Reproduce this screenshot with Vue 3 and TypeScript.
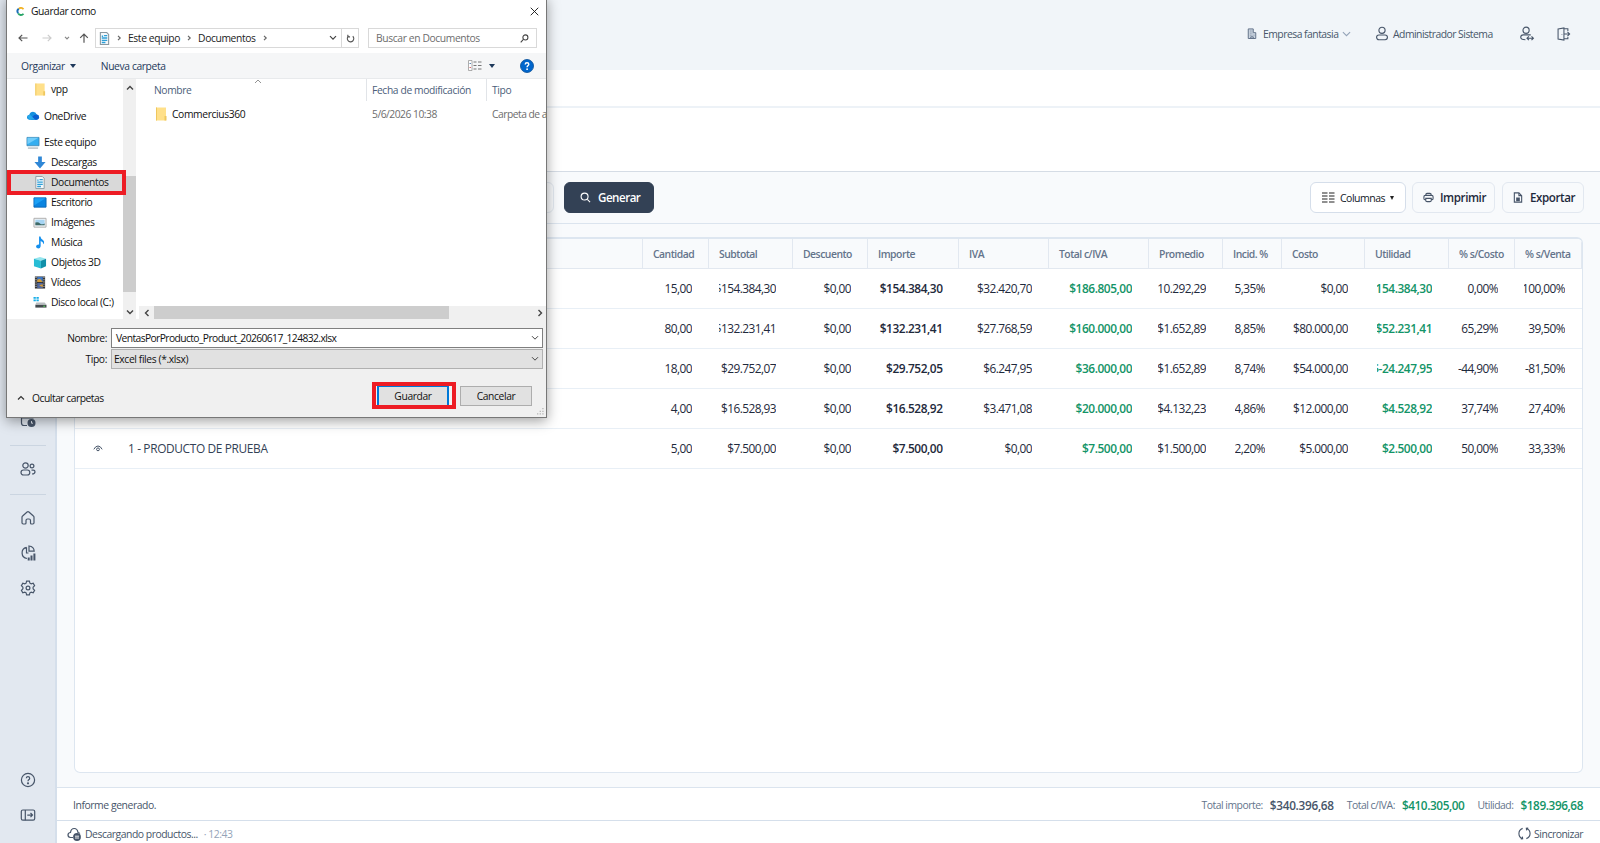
<script setup lang="ts">
interface Column { label: string; width: number; tone?: 'strong' | 'green' }
interface TreeItem { label: string; icon: string; level: 0 | 1; gap?: boolean; active?: boolean }

const columns: Column[] = [
  { label: 'Cantidad', width: 66 },
  { label: 'Subtotal', width: 84 },
  { label: 'Descuento', width: 75 },
  { label: 'Importe', width: 91, tone: 'strong' },
  { label: 'IVA', width: 90 },
  { label: 'Total c/IVA', width: 100, tone: 'green' },
  { label: 'Promedio', width: 74 },
  { label: 'Incid. %', width: 59 },
  { label: 'Costo', width: 83 },
  { label: 'Utilidad', width: 84, tone: 'green' },
  { label: '% s/Costo', width: 66 },
  { label: '% s/Venta', width: 67 },
]

const rows: { name: string; cells: string[] }[] = [
  { name: '', cells: ['15,00', '$154.384,30', '$0,00', '$154.384,30', '$32.420,70', '$186.805,00', '$10.292,29', '45,35%', '$0,00', '$154.384,30', '0,00%', '100,00%'] },
  { name: '', cells: ['80,00', '$132.231,41', '$0,00', '$132.231,41', '$27.768,59', '$160.000,00', '$1.652,89', '8,85%', '$80.000,00', '$52.231,41', '65,29%', '39,50%'] },
  { name: '', cells: ['18,00', '$29.752,07', '$0,00', '$29.752,05', '$6.247,95', '$36.000,00', '$1.652,89', '8,74%', '$54.000,00', '$-24.247,95', '-44,90%', '-81,50%'] },
  { name: '', cells: ['4,00', '$16.528,93', '$0,00', '$16.528,92', '$3.471,08', '$20.000,00', '$4.132,23', '4,86%', '$12.000,00', '$4.528,92', '37,74%', '27,40%'] },
  { name: '1 - PRODUCTO DE PRUEBA', cells: ['5,00', '$7.500,00', '$0,00', '$7.500,00', '$0,00', '$7.500,00', '$1.500,00', '2,20%', '$5.000,00', '$2.500,00', '50,00%', '33,33%'] },
]

const tree: TreeItem[] = [
  { label: 'vpp', icon: 'folder', level: 1 },
  { label: 'OneDrive', icon: 'cloud', level: 0, gap: true },
  { label: 'Este equipo', icon: 'pc', level: 0, gap: true },
  { label: 'Descargas', icon: 'down', level: 1 },
  { label: 'Documentos', icon: 'doc', level: 1, active: true },
  { label: 'Escritorio', icon: 'desk', level: 1 },
  { label: 'Imágenes', icon: 'image', level: 1 },
  { label: 'Música', icon: 'music', level: 1 },
  { label: 'Objetos 3D', icon: 'cube', level: 1 },
  { label: 'Vídeos', icon: 'video', level: 1 },
  { label: 'Disco local (C:)', icon: 'disk', level: 1 },
]
</script>

<template>
  <div class="app">
    <aside class="rail">
      <svg class="ri calendar" viewBox="0 0 16 16"><path d="M1.500 2v9q0 2.500 2.500 2.500H7M1.500 6h12" /><circle cx="11.500" cy="11" r="4" fill="#475569" stroke="none" /><path d="M11.500 9v2.200h1.500" stroke="#e2e8f0" stroke-width="1" /></svg>
      <hr class="d1" />
      <svg class="ri people" viewBox="0 0 16 16"><circle cx="5.500" cy="4.500" r="2.700" /><circle cx="12" cy="5" r="1.900" /><rect x="1" y="9" width="8.800" height="5" rx="2.500" /><path d="M11.500 9.200h1.800q1.700 0 1.700 1.600 0 2.200-3 2.200" /></svg>
      <hr class="d2" />
      <svg class="ri home" viewBox="0 0 16 16"><path d="M2 7.200Q2 6.500 2.600 6L7.100 2q.9-.8 1.800 0l4.500 4q.6.5.6 1.200v5.600q0 1.200-1.200 1.200h-1.300q-1 0-1-1V10.500q0-1.500-1.500-1.500H7.500Q6 9 6 10.500V13q0 1-1 1H3.200Q2 14 2 12.800z" /></svg>
      <svg class="ri chart" viewBox="0 0 16 16"><path d="M6.500 2.300A5.700 5.700 0 0 0 7 13.500M6.500 2.300V8h2M9 1v5.200h5.200Q14 1.500 9 1z" /><path d="M8.700 15.500v-3M11.500 15.500v-5M14.400 15.500v-7" stroke-width="2" /></svg>
      <svg class="ri gear" viewBox="0 0 16 16"><path d="M6.600 1.200h2.800l.5 2 1.300.7 2-.6 1.400 2.400-1.500 1.500v1.600l1.500 1.500-1.400 2.400-2-.6-1.300.7-.5 2H6.600l-.5-2-1.300-.7-2 .6-1.400-2.400 1.500-1.500V7.200L1.400 5.700l1.400-2.400 2 .6 1.300-.7z" /><circle cx="8" cy="8" r="1.900" /></svg>
      <svg class="ri help" viewBox="0 0 16 16"><circle cx="8" cy="8" r="6.600" /><path d="M6.300 6.300Q6.400 4.700 8 4.700t1.700 1.500Q9.700 7.100 8.700 7.800 8 8.300 8 9.200" /><circle cx="8" cy="11.300" r=".5" /></svg>
      <svg class="ri panel" viewBox="0 0 16 16"><rect x="1.300" y="3" width="13.400" height="10.200" rx="1.600" /><path d="M5.300 3v10.200M7.300 8.100h5M10.500 6l2 2.100-2 2.100" /></svg>
    </aside>

    <main class="main">
      <header class="top">
        <svg class="i building" viewBox="0 0 12 14"><path d="M1.500 13V1.500h6V6H10.500v7z" fill="#cbd5e1" stroke="#64748b" /><path d="M3.500 4h.8M5.500 4h.8M3.500 6.500h.8M5.500 6.500h.8M3.500 9h.8M5.500 9h.8M8 9h.8M4.500 13v-2h3v2" /></svg>
        <span class="t company">Empresa fantasia</span>
        <svg class="i chev" viewBox="0 0 10 6"><path d="M1 .8l4 4 4-4" /></svg>
        <svg class="i user" viewBox="0 0 14 16"><circle cx="7" cy="4.600" r="3.300" /><rect x="1.200" y="9.600" width="11.600" height="5" rx="2.500" /></svg>
        <span class="t admin">Administrador Sistema</span>
        <svg class="i swap" viewBox="0 0 16 16"><circle cx="7" cy="4.500" r="3.300" /><path d="M12 9.500H4Q1.300 9.500 1.300 12q0 2.600 5 2.600M8 13h6.500M10 11l-2 2 2 2M12.800 11l2 2-2 2" /></svg>
        <svg class="i exit" viewBox="0 0 16 16"><path d="M8.500 2H13v2.500M13 11.500V13.500H8.500M1.800 2.300L8.500 1v14l-6.700-1.300zM6.200 8v.5M8.500 8H15M12.500 5.500L15 8l-2.500 2.500" /></svg>
      </header>
      <div class="tabs" />
      <div class="heading" />
      <section class="tools">
        <span class="btn ghost" />
        <button class="btn primary"><svg viewBox="0 0 12 12"><circle cx="5" cy="5" r="3.800" /><path d="M8 8l3 3" /></svg><span>Generar</span></button>
        <i class="grow" />
        <button class="btn cols"><svg viewBox="0 0 13 11"><path d="M0 1h5.500M0 4h5.500M0 7h5.500M0 10h5.500M7 1h5.500M7 4h5.500M7 7h5.500M7 10h5.500" /></svg><span>Columnas</span><b class="tri" /></button>
        <button class="btn print"><svg viewBox="0 0 12 12"><path d="M3 3.500Q3 1.500 4.500 1.500h3Q9 1.500 9 3.500M3 8.500H2.500Q1 8.500 1 7V5.200Q1 3.700 2.500 3.700h7Q11 3.700 11 5.200V7Q11 8.500 9.500 8.500H9M3 7h6v2.200Q9 10.500 7.500 10.500h-3Q3 10.500 3 9.200z" /></svg><span>Imprimir</span></button>
        <button class="btn export"><svg viewBox="0 0 10 12"><path d="M1 1h5l3 3v7H1z" /><path d="M6 1v3h3" /><path d="M3 6h4v4H3z" fill="#475569" /></svg><span>Exportar</span></button>
      </section>
      <section class="content">
        <div class="grid">
          <div class="row head">
            <div class="name" />
            <div v-for="c in columns" :key="c.label" class="hc" :style="{ width: c.width + 'px' }">{{ c.label }}</div>
          </div>
          <div v-for="(r, n) in rows" :key="n" class="row">
            <div class="name">
              <svg class="eye" viewBox="0 0 12 8"><path d="M1 5Q3 1 6 1t5 4" /><circle cx="6" cy="5" r="1.700" /></svg>
              <span>{{ r.name }}</span>
            </div>
            <div v-for="(v, k) in r.cells" :key="k" class="cell" :class="columns[k].tone" :style="{ width: columns[k].width + 'px' }"><span class="clip"><span>{{ v }}</span></span></div>
          </div>
        </div>
      </section>
      <footer class="summary">
        <span class="msg">Informe generado.</span><i class="grow" />
        <span class="k k1">Total importe:</span><b class="v">$340.396,68</b>
        <span class="k k2">Total c/IVA:</span><b class="v green">$410.305,00</b>
        <span class="k k3">Utilidad:</span><b class="v green">$189.396,68</b>
      </footer>
      <footer class="status">
        <svg class="sync-cloud" viewBox="0 0 14 14"><path d="M6 10.500H3.500Q1 10.300 1 8t2.500-2.500Q4 1.500 7.200 1.500T11 5.500q1.300.1 1.800 1" /><circle cx="10" cy="10" r="3.900" fill="#475569" stroke="none" /><path d="M8 9.200h4M8 11h4" stroke="#fff" stroke-width=".9" /></svg>
        <span class="dl">Descargando productos...</span><span class="time">· 12:43</span><i class="grow" />
        <svg class="sync" viewBox="0 0 14 14"><path d="M5 1.500Q1 3 1 7t3.500 5.500M3 12.800l2-.2-.3-2.200M9 12.500Q13 11 13 7T9.500 1.500M11 1.200l-2 .2.300 2.200" /></svg>
        <span class="sy">Sincronizar</span>
      </footer>
    </main>

    <div class="dialog">
      <div class="title">
        <svg class="logo" viewBox="0 0 10 10"><path d="M8.300 2.500A3.500 3.500 0 0 0 3 2" stroke="#f2b01e" /><path d="M3 2a3.600 3.600 0 0 0-.6 5" stroke="#1d6fb8" /><path d="M2.400 7a3.500 3.500 0 0 0 5.900.5" stroke="#27a567" /></svg>
        <span>Guardar como</span><i class="grow" />
        <svg class="close" viewBox="0 0 10 10"><path d="M.8.800l8.400 8.400M9.200.800L.8 9.200" /></svg>
      </div>
      <div class="nav">
        <svg class="arr back" viewBox="0 0 10 8"><path d="M9.500 4H1M4.200.800L1 4l3.200 3.200" /></svg>
        <svg class="arr fwd" viewBox="0 0 10 8"><path d="M.5 4H9M5.800.800L9 4 5.800 7.200" /></svg>
        <svg class="arr small" viewBox="0 0 6 4"><path d="M1 .8l2 2 2-2" /></svg>
        <svg class="arr up" viewBox="0 0 10 10"><path d="M5 9.800V1M1.200 4.800L5 1l3.800 3.800" /></svg>
        <div class="address">
          <svg class="doc" viewBox="0 0 12 14"><path d="M1.500.5h7l2 2v11h-9z" fill="#f4f8fb" stroke="#8b989f" /><path d="M3 6.500h6M3 9h6M3 11.300h4M5.500 3.800h3.500M3 4.500h1.500" stroke="#2d9fd8" stroke-width="1.500" /></svg>
          <svg class="sep" viewBox="0 0 4 6"><path d="M1 .8L3.200 3 1 5.200" /></svg><span class="a1">Este equipo</span>
          <svg class="sep" viewBox="0 0 4 6"><path d="M1 .8L3.200 3 1 5.200" /></svg><span class="a2">Documentos</span>
          <svg class="sep" viewBox="0 0 4 6"><path d="M1 .8L3.200 3 1 5.200" /></svg><i class="grow" />
          <svg class="drop" viewBox="0 0 8 6"><path d="M1 1.200l3 3 3-3" /></svg>
          <span class="reload"><svg viewBox="0 0 10 10"><path d="M3 2.200A3.600 3.600 0 1 0 7.500 2.500M2 .8v2.400h2.500" /></svg></span>
        </div>
        <div class="search"><span>Buscar en Documentos</span><svg viewBox="0 0 10 10"><circle cx="6" cy="3.800" r="2.800" /><path d="M4 5.800L.8 9.200" /></svg></div>
      </div>
      <div class="bar">
        <span class="org">Organizar</span><b class="caret" /><span class="new">Nueva carpeta</span><i class="grow" />
        <svg class="views" viewBox="0 0 14 11"><path d="M.5.500h3.500v10H.5z" fill="#fff" stroke="#999" stroke-width=".8" /><path d="M1.500 3.500h1.500" stroke="#5b87b5" /><path d="M1.500 7.500h1.500" stroke="#d66" /><path d="M5.500 2h3M10 2h3.500M5.500 5.500h3M10 5.500h3.500M5.500 9h3M10 9h3.500" stroke="#777" /></svg>
        <b class="caret vc" />
        <svg class="qm" viewBox="0 0 14 14"><circle cx="7" cy="7" r="6.500" fill="#0066cc" stroke="#014a94" stroke-width=".8" /><path d="M5.200 5.400Q5.200 3.700 7 3.700t1.800 1.500Q8.800 6 7.900 6.600 7.100 7.100 7.100 8.200" stroke="#fff" stroke-width="1.400" fill="none" /><circle cx="7.100" cy="10.200" r=".9" fill="#fff" stroke="none" /></svg>
      </div>
      <div class="body">
        <div class="tree">
          <div v-for="t in tree" :key="t.label" class="node" :class="{ sub: t.level === 1, gap: t.gap, active: t.active }">
            <svg viewBox="0 0 14 14">
              <g v-if="t.icon === 'folder'"><path d="M2 .5h10v13H2z" fill="#ffe08a" /><path d="M2 .5h1v13H2zM10.500 9h2v4.500h-2z" fill="#efc75e" /></g>
              <g v-else-if="t.icon === 'cloud'"><path d="M3.500 11.500Q.5 11.200.5 8.800T3 6.200Q4 3 7 3t4 3q2.500.3 2.500 2.800T11 11.500z" fill="#1490df" /><path d="M6 8.500Q8 6 11 6q2.500.3 2.500 2.800T11 11.500H5z" fill="#0a5fd0" /><path d="M1 8Q2 6 4 6.400L9.500 11.500H3Z" fill="#28a8ea" /></g>
              <g v-else-if="t.icon === 'pc'"><path d="M.5 1.500h13v9H.5z" fill="#35aef0" stroke="#3880ad" stroke-width=".8" /><path d="M1 2h12L1 9z" fill="#72cdfa" /><path d="M1.500 13h11" stroke="#8b9aa3" /></g>
              <path v-else-if="t.icon === 'down'" d="M5 .5h4v6h4L7 13.500 1 6.500h4z" fill="#2f87d6" />
              <g v-else-if="t.icon === 'doc'"><path d="M2.500.5h7l2 2v11h-9z" fill="#f4f8fb" stroke="#8b989f" /><path d="M4 6.500h6M4 9h6M4 11.300h4M6.500 3.800H10M4 4.500h1.500" stroke="#2d9fd8" stroke-width="1.400" /></g>
              <g v-else-if="t.icon === 'desk'"><path d="M.5 2h13v10H.5z" fill="#0a84e0" stroke="#0a66b5" /><path d="M1 2.500h12L1 10z" fill="#1ba0f5" /></g>
              <g v-else-if="t.icon === 'image'"><path d="M.5 2.500h13v9.500H.5z" fill="#f5f5f5" stroke="#aaa" /><path d="M2 4h10v6H2z" fill="#a6d4f3" /><path d="M2 7q3-1 5 1t5 0v2H2z" fill="#3f6965" /></g>
              <path v-else-if="t.icon === 'music'" d="M6 .5h1.500q.3 2.300 2.300 3.500 2.700 2 .9 5 0-2.500-3-3.500v5.500Q7.500 13.500 5 13.500q-2.300-.3-2.300-2.100Q3 9 6 9.200z" fill="#1590ee" />
              <g v-else-if="t.icon === 'cube'"><path d="M.5 3L7 1l6.500 2L8 5z" fill="#93e5ee" /><path d="M.5 3L8 5v8.500L.5 11z" fill="#28bdd5" /><path d="M8 5l5.500-2v8L8 13.500z" fill="#1190a9" /></g>
              <g v-else-if="t.icon === 'video'"><path d="M1.500.5h11v13h-11z" fill="#333" /><path d="M4 1h6v5.500H4z" fill="#3e76c2" /><path d="M4 7.500h6V13H4z" fill="#5269a0" /><path d="M4 4l3-1 3 3.500H4zM6 10l4-1v3z" fill="#d49a35" /><path d="M2.700 1v12M11.300 1v12" stroke="#ddd" stroke-dasharray="1.200 1.200" /></g>
              <g v-else><path d="M0 1h2.500v2H0zM3.200 1h2.500v2H3.200zM0 3.700h2.500v2H0zM3.200 3.700h2.500v2H3.200z" fill="#16aee8" /><path d="M3 7h9l2 2.500H2z" fill="#b9bec1" /><path d="M2 9.500h12v3H2z" fill="#444a4e" /><path d="M10.500 11h2" stroke="#5be35b" /></g>
            </svg>
            <span>{{ t.label }}</span>
          </div>
        </div>
        <div class="vscroll"><svg viewBox="0 0 8 6"><path d="M1 4.500l3-3 3 3" /></svg><i /><svg class="dn" viewBox="0 0 8 6"><path d="M1 1.500l3 3 3-3" /></svg></div>
        <div class="list">
          <svg class="sort" viewBox="0 0 8 5"><path d="M1 4l3-3 3 3" /></svg>
          <div class="lh"><span class="c1">Nombre</span><span class="c2">Fecha de modificación</span><span class="c3">Tipo</span></div>
          <div class="lr"><span class="c1"><svg viewBox="0 0 12 14"><path d="M1 .5h10v13H1z" fill="#ffe08a" /><path d="M1 .5h1v13H1zM9.500 9h2v4.500h-2z" fill="#efc75e" /></svg>Commercius360</span><span class="c2">5/6/2026 10:38</span><span class="c3">Carpeta de a</span></div>
          <i class="grow" />
          <div class="hscroll"><svg viewBox="0 0 6 8"><path d="M4.500 1l-3 3 3 3" /></svg><i /><svg class="rt" viewBox="0 0 6 8"><path d="M1.500 1l3 3-3 3" /></svg></div>
        </div>
      </div>
      <div class="form">
        <div class="field"><label>Nombre:</label><div class="input"><span class="fname">VentasPorProducto_Product_20260617_124832.xlsx</span><svg viewBox="0 0 8 6"><path d="M1 1.200l3 3 3-3" /></svg></div></div>
        <div class="field type"><label>Tipo:</label><div class="input"><span class="ftype">Excel files (*.xlsx)</span><svg viewBox="0 0 8 6"><path d="M1 1.200l3 3 3-3" /></svg></div></div>
        <div class="actions">
          <svg viewBox="0 0 8 6"><path d="M1 4.500l3-3 3 3" /></svg><span class="hide">Ocultar carpetas</span><i class="grow" />
          <div class="mark"><button class="wb def">Guardar</button></div>
          <button class="wb">Cancelar</button>
        </div>
      </div>
      <div class="ring" />
      <svg class="grip" viewBox="0 0 8 8"><path d="M6 0h1.500v1.500H6zM3 3h1.500v1.500H3zM6 3h1.500v1.500H6zM0 6h1.500v1.500H0zM3 6h1.500v1.500H3zM6 6h1.500v1.500H6z" fill="#b5b5b5" /></svg>
    </div>
  </div>
</template>

<style>
body { margin: 0; overflow: hidden; }
</style>

<style scoped>
.app { position: relative; display: flex; width: 1600px; height: 843px; overflow: hidden; background: #f8fafc; font-family: "Open Sans", "Noto Sans", sans-serif; font-size: 11.900px; color: #334155; white-space: nowrap; }
.app * { box-sizing: border-box; }
svg { display: block; flex: none; fill: none; stroke: #475569; stroke-width: 1.2; overflow: visible; }
svg g, svg path[fill]:not([stroke]) { stroke: none; }
.grow { flex: 1; }
button { font: inherit; letter-spacing: inherit; color: inherit; padding: 0; margin: 0; }

.rail { width: 57px; height: 843px; background: #e2e8f0; border-right: 2px solid #d5dfeb; display: flex; flex-direction: column; align-items: center; padding-top: 412px; }
.ri { width: 16px; height: 16px; }
.rail hr { width: 36px; height: 1px; margin: 0; border: 0; background: #cbd5e1; }
.d1 { margin-top: 17px !important; }
.people { margin-top: 15px; }
.d2 { margin-top: 17px !important; }
.home { margin-top: 14.500px; }
.chart { margin-top: 19px; }
.gear { margin-top: 19px; }
.help { margin-top: 176px; }
.panel { margin-top: 19px; }

.main { flex: 1; display: flex; flex-direction: column; min-width: 0; }
.top { height: 70px; background: #f1f5f9; display: flex; align-items: center; justify-content: flex-end; padding-right: 29px; padding-bottom: 3px; color: #475569; font-size: 10.400px; letter-spacing: -.52px; }
.building { width: 10px; height: 13px; stroke: #64748b; margin-right: 6px; }
.company { width: 75px; }
.chev { width: 9px; height: 6px; stroke: #94a3b8; margin: 0 24px 0 4px; }
.user { width: 14px; height: 15px; margin-right: 4px; }
.admin { width: 101px; }
.swap { width: 16px; height: 15px; margin-left: 25px; }
.exit { width: 15px; height: 14px; margin-left: 21px; }
.tabs { height: 38px; background: #fff; border-bottom: 2px solid #edf2f7; }
.heading { height: 64px; background: #fff; border-bottom: 1px solid #d5dce5; }
.tools { height: 52px; padding: 10px 16px 0 0; border-bottom: 1px solid #dbe4ee; background: #f8fafc; display: flex; }
.btn { flex: none; height: 31px; display: flex; align-items: center; border: 1px solid #e2e8f0; border-radius: 6px; background: #f8fafc; color: #1e293b; font-weight: 600; font-size: 11.600px; letter-spacing: -.42px; }
.ghost { width: 60px; margin-left: 437px; }
.primary { width: 90px; margin-left: 10px; background: #334155; border-color: #334155; color: #fff; padding-left: 15px; letter-spacing: -.5px; }
.primary svg { width: 11px; height: 11px; stroke: #fff; margin-right: 7px; }
.cols { width: 96px; background: #fff; border-color: #d5deea; padding-left: 11px; font-size: 10.500px; letter-spacing: -.5px; font-weight: 400; color: #111827; }
.cols svg { width: 13px; height: 11px; stroke: #222; margin-right: 5px; }
.tri { margin-left: 5px; border: 2px solid transparent; border-top: 4px solid #222; border-bottom: 0; }
.print { width: 83px; margin-left: 6px; padding-left: 10px; }
.print svg { width: 11px; height: 11px; margin-right: 6px; }
.export { width: 82px; margin-left: 7px; padding-left: 10px; }
.export svg { width: 10px; height: 11px; margin-right: 7px; }

.content { flex: 1; padding: 13px 17px 15px 17px; min-height: 0; }
.grid { height: 536px; background: #fff; border: 1px solid #dde6f0; border-top-width: 2px; border-radius: 6px; overflow: hidden; }
.row { display: flex; height: 40px; border-bottom: 1px solid #e8eff6; }
.head { height: 30px; background: #f8fafc; border-bottom: 1px solid #e2e8f0; }
.name { width: 568px; flex: none; display: flex; align-items: center; color: #334155; letter-spacing: -.36px; }
.head .name, .hc { border-right: 1px solid #e2e8f0; }
.name span { margin-left: 25px; line-height: 38px; padding-bottom: 1px; }
.eye { width: 10px; height: 7px; margin-left: 18px; stroke: #475569; }
.hc { flex: none; padding-left: 10px; line-height: 30px; font-size: 10.400px; font-weight: 600; color: #64748b; letter-spacing: -.5px; }
.cell { flex: none; padding: 0 17px 0 10px; line-height: 39px; color: #1e293b; letter-spacing: -.55px; }
.cell:nth-child(8), .cell:nth-child(12), .cell:nth-child(13) { padding-left: 9px; }
.cell:nth-child(9), .cell:nth-child(11) { padding-left: 11.500px; }
.clip { display: flex; justify-content: flex-end; overflow: hidden; }
.cell.strong, .cell.green { letter-spacing: -.45px; }
.cell.strong { padding-right: 16.500px; }
.strong { font-weight: 600; }
.green { font-weight: 600; color: #139467; }
.summary { height: 34px; background: #fff; border-top: 1px solid #dbe4ee; border-bottom: 1px solid #d5dfeb; display: flex; align-items: center; padding: 2px 17px 0 16px; font-size: 10.400px; letter-spacing: -.43px; color: #475569; }
.k { color: #64748b; margin-left: 13px; margin-right: 7px; letter-spacing: -.48px; }
.v { font-size: 11.800px; font-weight: 600; letter-spacing: -.3px; }
.v.green { letter-spacing: -.42px; }
.status { height: 22px; background: #fff; display: flex; align-items: center; padding: 3px 17px 0 10px; font-size: 10.400px; letter-spacing: -.47px; color: #475569; }
.sync-cloud { width: 14px; height: 14px; margin-right: 4px; }
.time { color: #94a3b8; margin-left: 6px; }
.sync { width: 13px; height: 13px; margin-right: 3px; }

.dialog { position: absolute; left: 6px; top: -3px; width: 541px; height: 421px; padding-top: 1px; border: 1px solid #777; background: #fff; box-shadow: 0 3px 12px rgba(0, 0, 0, .38); display: flex; flex-direction: column; font-size: 10.300px; letter-spacing: -.38px; color: #111; }
.title { height: 24px; display: flex; align-items: center; padding: 0 7px 0 9px; }
.logo { width: 9px; height: 9px; margin-right: 6px; stroke-width: 2; }
.close { width: 9px; height: 9px; stroke: #111; stroke-width: 1; }
.nav { height: 30px; display: flex; align-items: center; padding-left: 11px; }
.arr { width: 10px; height: 8px; stroke: #555; }
.fwd { margin-left: 14px; stroke: #ccc; }
.small { width: 6px; height: 4px; margin-left: 12px; stroke: #888; }
.up { height: 10px; margin-left: 9px; }
.address { width: 264px; height: 20px; margin-left: 6px; border: 1px solid #d9d9d9; display: flex; align-items: center; padding-left: 3px; color: #222; }
.doc { width: 11px; height: 13px; }
.sep { width: 4px; height: 6px; stroke: #666; margin: 0 7px; }
.drop { width: 8px; height: 6px; stroke: #444; margin-right: 4px; }
.reload { width: 17px; height: 18px; border-left: 1px solid #d9d9d9; display: grid; place-items: center; }
.reload svg { width: 9px; height: 9px; stroke: #555; }
.search { width: 169px; height: 20px; margin-left: 9px; border: 1px solid #d9d9d9; display: flex; align-items: center; justify-content: space-between; padding: 0 7px; color: #6d6d6d; }
.search svg { width: 9px; height: 9px; stroke: #444; }
.bar { height: 26px; background: #f5f6f7; border-bottom: 1px solid #e8eaec; display: flex; align-items: center; padding: 0 12px 0 14px; color: #1e395b; }
.caret { border: 3px solid transparent; border-top: 4px solid #1e395b; border-bottom: 0; margin-left: 5px; }
.new { margin-left: 25px; }
.views { width: 14px; height: 11px; stroke-width: 1; }
.vc { margin: 0 25px 0 7px; }
.qm { width: 14px; height: 14px; }
.body { height: 240px; display: flex; }
.tree { width: 116px; overflow: hidden; }
.node { height: 20px; display: flex; align-items: center; padding-left: 19px; color: #111; }
.node.sub { padding-left: 26px; }
.node.gap { height: 20px; margin-top: 6.500px; }
.node.active { background: #d9d9d9; }
.node svg { width: 14px; height: 13px; margin-right: 4px; stroke-width: 1; }
.vscroll { width: 13px; background: #f0f0f0; display: flex; flex-direction: column; align-items: center; padding: 6px 0 4px; }
.vscroll svg, .hscroll svg { stroke: #444; stroke-width: 1.400; }
.vscroll svg { width: 8px; height: 6px; }
.vscroll i { width: 13px; height: 116px; margin-top: 85px; background: #cdcdcd; }
.dn { margin-top: auto; }
.list { position: relative; flex: 1; min-width: 0; margin-left: 3px; display: flex; flex-direction: column; overflow: hidden; }
.sort { position: absolute; left: 115px; top: 0; width: 8px; height: 5px; stroke: #777; stroke-width: .8; }
.lh, .lr { display: flex; height: 22px; align-items: center; color: #4c607a; }
.lr { margin-top: 2px; color: #6d6d6d; }
.lh span { line-height: 22px; }
.c1, .c2, .c3 { flex: none; }
.c1 { width: 227px; padding-left: 15px; display: flex; align-items: center; }
.lr .c1 { color: #111; padding-left: 16px; }
.lr svg { width: 12px; height: 14px; margin-right: 5px; }
.c2 { width: 120px; }
.lh .c2, .lh .c3 { border-left: 1px solid #e1e4e8; padding-left: 5px; }
.lr .c2, .lr .c3 { padding-left: 6px; letter-spacing: -.5px; }
.hscroll { height: 13px; background: #f0f0f0; display: flex; align-items: center; padding: 0 3px 0 5px; }
.hscroll svg { width: 6px; height: 8px; }
.hscroll i { width: 295px; height: 13px; margin-left: 4px; background: #cdcdcd; }
.rt { margin-left: auto; }
.form { flex: 1; background: #f0f0f0; padding-top: 9px; }
.field { display: flex; align-items: center; height: 20px; }
.field label { width: 100px; text-align: right; margin-right: 4px; }
.fname { letter-spacing: -.6px; }
.input { width: 432px; height: 20px; background: #fff; border: 1px solid #7f7f7f; display: flex; align-items: center; justify-content: space-between; padding: 0 3px 0 4px; }
.field svg { width: 8px; height: 6px; stroke: #444; stroke-width: 1; }
.type { margin-top: 1px; }
.type .input { background: #e1e1e1; border-color: #b0b0b0; padding-left: 2px; }
.actions { display: flex; align-items: center; margin-top: 13px; height: 27px; padding: 0 14px 0 10px; }
.actions > svg { width: 8px; height: 6px; margin-top: 5px; margin-right: 7px; stroke: #333; }
.hide { margin-top: 4px; letter-spacing: -.48px; }
.mark { width: 84px; height: 27px; border: 4px solid #ed1c24; background: #f3f3f3; padding: 0 4px 0 1px; margin-right: 4px; }
.wb { width: 72px; height: 20px; border: 1px solid #adadad; background: #e1e1e1; text-align: center; color: #111; }
.def { width: 72px; height: 19px; border: 1px solid #0078d7; border-left-width: 2px; border-right-width: 2px; border-bottom: 0; display: block; }
.ring { position: absolute; left: 0; top: 172px; width: 119px; height: 25px; border: 4px solid #ed1c24; }
.grip { position: absolute; right: 2px; bottom: 2px; width: 7px; height: 7px; }
</style>
